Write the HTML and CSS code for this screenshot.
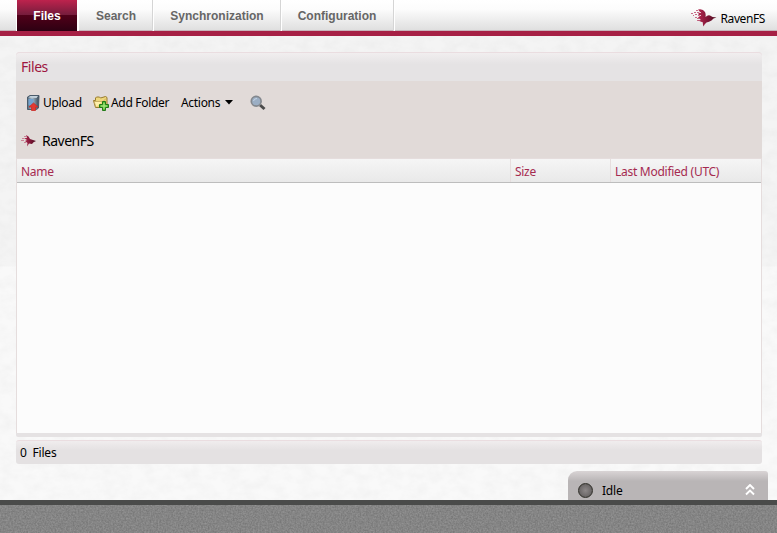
FILE: index.html
```html
<!DOCTYPE html>
<html lang="en">
<head>
<meta charset="utf-8">
<title>RavenFS Studio</title>
<link rel="stylesheet" href="styles.css">
</head>
<body>
<svg width="0" height="0" class="defs" aria-hidden="true">
  <defs>
    <linearGradient id="metal"><stop offset="0" stop-color="#536779"/><stop offset=".4" stop-color="#a9bccb"/><stop offset="1" stop-color="#344654"/></linearGradient>
    <linearGradient id="wing" x2="1"><stop offset="0" stop-color="#b32850"/><stop offset=".55" stop-color="#7c1535"/><stop offset="1" stop-color="#4c1020"/></linearGradient>
    <symbol id="raven" viewBox="0 0 26 18">
      <path d="M5 1h2v1H5zM3 3h2v1H3zM6 3h2v1H6zM0 4h2v1H0zM4 5h2v1H4zM2 6h1v1H2zM7 6h1v1H7zM4 8h2v1H4zM6 9h2v1H6zM6 11h2v1H6z" fill="#c66b87"/>
      <path d="M7 .5Q12-.5 14 3Q15 5 14.500 8Q17 5.500 19 6.500Q21 8.500 25.500 8.500Q22 9 20.500 11.500Q18 13 15.500 13.500Q13.500 15 12.500 17.500Q11.500 15 12 13.500L7 11.500L10 11L7 8.500L9 7L7 5L9 3Z" fill="url(#wing)"/>
      <path d="M8 3h2v1H8zM9 6h1v1H9z" fill="#eac8d1"/>
    </symbol>
  </defs>
</svg>
<svg class="texture" width="777" height="533" aria-hidden="true">
  <filter id="plaster" color-interpolation-filters="sRGB"><feTurbulence type="fractalNoise" baseFrequency=".07 .1" numOctaves="4" seed="8"/><feColorMatrix values="0 0 0 0 .5 0 0 0 0 .5 0 0 0 0 .5 .09 0 0 0 -.03"/></filter>
  <rect width="777" height="533" filter="url(#plaster)"/>
</svg>
<div class="app">
  <header class="topbar">
    <nav class="tabs">
      <a class="tab active"><span>Files</span></a>
      <a class="tab search"><span>Search</span></a>
      <a class="tab sync"><span>Synchronization</span></a>
      <a class="tab config"><span>Configuration</span></a>
    </nav>
    <div class="brand"><svg width="26" height="18"><use href="#raven"/></svg><span>RavenFS</span></div>
  </header>
  <main class="content">
    <section class="panel">
      <h1 class="title">Files</h1>
      <div class="tools">
        <div class="toolbar">
          <button class="upload">
            <svg width="14" height="16" viewBox="0 0 14 16"><path d="M1.500 2L4 .5h9l-.5 12.500-2 1.500h-9z" fill="url(#metal)" stroke="#4a5b6b"/><path d="M2.500 2.500L4.500 1h7.500l-1.500 2z" fill="#c4d2dc"/><path d="M2.500 4h5v6h-5z" fill="#73a3cf"/><path d="M7.500 8l4.500 4h-2.500v3.500h-4V12H3z" fill="#e13a31" stroke="#c92b28" stroke-width=".8"/></svg>
            <span>Upload</span></button>
          <button class="add">
            <svg width="16" height="16" viewBox="0 0 16 16"><path d="M2.500 12.500L.5 5.500h2V3l1-1h3l1 1 5-1.500 1.500 1v8l-3 2z" fill="#efd77c" stroke="#987b2e"/><path d="M3 12L1 6.500h9l3-3" fill="#fff0ab" stroke="#b7994d" stroke-width=".7"/><path d="M9.500 6.500h3v3h3v3h-3v3h-3v-3h-3v-3h3z" fill="#58bd35" stroke="#227a18"/><path d="M11 8v6M8 11h6" stroke="#b2ec8e"/></svg>
            <span>Add Folder</span></button>
          <button class="actions"><span>Actions</span><svg width="8" height="5" viewBox="0 0 8 5"><path d="M0 0h8L4 4.500z"/></svg></button>
          <button class="find" aria-label="Search"><svg width="16" height="16" viewBox="0 0 16 16"><path d="M10 10l4.500 4" stroke="#4b4b4b" stroke-width="3"/><circle cx="6.200" cy="6.200" r="4.900" fill="#9baec4" stroke="#84888e" stroke-width="1.700"/><path d="M3.500 6Q4 3.500 7 3.500" fill="none" stroke="#c6d5e5"/></svg></button>
        </div>
        <div class="path"><svg width="16" height="12" viewBox="0 0 16 12"><path d="M3 1h2v1H3zM1 3h2v1H1zM0 5h3v1H0zM3 7h2v1H3z" fill="#c98396"/><path d="M5 0Q8 1 9 4L15 6Q12 7 11 9L8 8.500L6 11.500L6.500 8L4 6L6 5L3 3L6 3Z" fill="url(#wing)"/></svg><span>RavenFS</span></div>
      </div>
      <div class="grid">
        <div class="columns"><div><span>Name</span></div><div><span>Size</span></div><div><span class="modified">Last Modified (UTC)</span></div></div>
        <div class="rows"></div>
      </div>
    </section>
    <div class="count"><span>0&nbsp; Files</span></div>
  </main>
  <div class="status"><i class="lamp"></i><span>Idle</span><svg width="10" height="12" viewBox="0 0 10 12"><path d="M1 5l4-4 4 4M1 10.500l4-4 4 4" fill="none" stroke="#fff" stroke-width="1.900"/></svg></div>
  <footer class="footer"><svg width="777" height="28"><filter id="noise" x="0" y="0" width="1" height="1" color-interpolation-filters="sRGB"><feTurbulence type="fractalNoise" baseFrequency=".6" numOctaves="2" seed="3"/><feColorMatrix values=".17 0 0 0 .435 .17 0 0 0 .435 .17 0 0 0 .435 0 0 0 0 1"/></filter><rect width="777" height="28" filter="url(#noise)"/></svg></footer>
</div>
</body>
</html>
```
FILE: styles.css
```css
* { box-sizing: border-box; }
body { margin: 0; overflow: hidden; font: 12px/16px "Noto Sans", sans-serif; color: #000; background: linear-gradient(#f4f4f4 0, #f4f4f4 266px, #f9f9f9 267px, #f9f9f9 533px); }
.defs { position: absolute; }
.texture { position: absolute; inset: 0; }
svg { display: block; flex: none; }
span { white-space: nowrap; }
.app { position: relative; width: 777px; height: 533px; display: flex; flex-direction: column; }
.topbar { height: 36px; flex: none; display: flex; justify-content: space-between; border-bottom: 5px solid #a62045; background: linear-gradient(#fff 0, #fcfcfc 30%, #dedede 100%); box-shadow: inset 0 -1px #c7b5bb; }
.tabs { display: flex; height: 31px; padding-left: 16px; }
.tab { display: flex; justify-content: center; border-right: 1px solid #d5d5d5; box-shadow: 1px 0 #fff; font: bold 12px/32px "Liberation Sans", sans-serif; color: #666; }
.tab.active { width: 62px; border: 1px solid #fff; border-width: 0 1px; color: #fff; background: linear-gradient(#bd234d 0, #751c3c 48%, #500019 50%, #2d0012 100%); }
.search { width: 75px; padding-left: 2px; }
.sync { width: 128px; padding-left: 1px; }
.config { width: 113px; }
.brand { display: flex; align-items: flex-start; gap: 4px; padding: 9px 12px 0 0; }
.brand span { padding-top: 2px; font-size: 12px; letter-spacing: -.4px; }
.content { flex: none; width: 746px; margin: 16px 0 0 16px; }
.panel { height: 385px; border-radius: 4px 4px 2px 2px; background: #e5e2e3; }
.title { height: 29px; margin: 0; padding-left: 5px; border-top: 1px solid #eadde0; border-radius: 4px 4px 0 0; background: linear-gradient(#f1eeef, #e5e3e4 40%); font-size: 14px; line-height: 28px; font-weight: 400; letter-spacing: -.45px; color: #9e1740; }
.tools { height: 77px; background: #e1dad8; }
.toolbar { height: 43px; display: flex; align-items: center; padding: 0 0 0 10px; letter-spacing: -.3px; }
button { display: flex; align-items: center; padding: 0; border: 0; background: none; font: inherit; letter-spacing: inherit; color: inherit; }
.upload { gap: 3px; width: 67px; }
.add { gap: 2px; width: 88px; }
.actions { gap: 5px; width: 69px; }
.path { height: 34px; display: flex; align-items: center; gap: 5px; padding: 0 0 0 5px; font-size: 14px; letter-spacing: -.5px; }
.grid { height: 275px; border: solid #e5dddd; border-width: 1px 1px 0; }
.columns { height: 24px; display: grid; grid-template-columns: 494px 100px 1fr; background: linear-gradient(#f5f5f5, #e9e9e9); border-bottom: 1px solid #bdbdbd; color: #a52a50; }
.columns div { padding: 5px 4px 0; border-right: 1px solid #e6dede; letter-spacing: -.3px; }
.columns div:last-child { border: 0; }
.modified { letter-spacing: -.27px; }
.rows { height: 250px; background: #fcfcfc; }
.count { height: 24px; margin-top: 3px; padding: 4px 4px 0; border-top: 1px solid #eadde0; border-radius: 3px; background: linear-gradient(#f0edee, #e4e1e2 40%); font-size: 12px; letter-spacing: -.2px; }
.status { flex: none; width: 200px; height: 29px; margin: 7px 9px 0 auto; display: flex; align-items: center; padding: 9px 13px 0 10px; border-radius: 9px 3px 0 0; background: linear-gradient(#d9d4d5, #b9b5b6 35%); }
.lamp { width: 15px; height: 15px; border-radius: 50%; border: 1px solid #302f29; background: radial-gradient(#8d8888, #6e6a6a 60%, #45443e); }
.status span { margin: 0 auto 0 9px; padding-top: 2px; letter-spacing: -.2px; }
.footer { height: 33px; flex: none; border-top: 5px solid #4a4b4a; }
```
